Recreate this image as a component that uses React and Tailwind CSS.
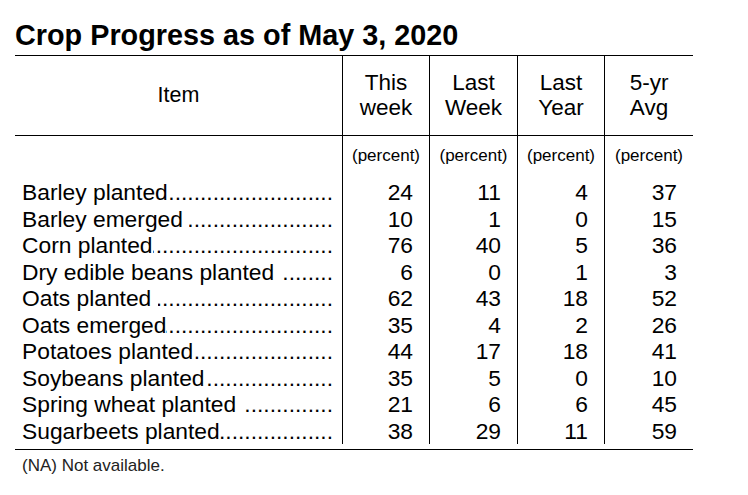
import React from 'react';

const rows = [
  ['Barley planted', '24', '11', '4', '37'],
  ['Barley emerged ', '10', '1', '0', '15'],
  ['Corn planted', '76', '40', '5', '36'],
  ['Dry edible beans planted ', '6', '0', '1', '3'],
  ['Oats planted ', '62', '43', '18', '52'],
  ['Oats emerged', '35', '4', '2', '26'],
  ['Potatoes planted', '44', '17', '18', '41'],
  ['Soybeans planted', '35', '5', '0', '10'],
  ['Spring wheat planted ', '21', '6', '6', '45'],
  ['Sugarbeets planted', '38', '29', '11', '59'],
];

const heads = [
  ['This', 'week'],
  ['Last', 'Week'],
  ['Last', 'Year'],
  ['5-yr', 'Avg'],
];

const cols = 'grid grid-cols-[327px_87px_88px_87px_89px]';
const dots = '.'.repeat(80);

export default function App() {
  return (
    <div
      className="w-[748px] h-[495px] bg-white text-black pl-[15px] pt-[19px]"
      style={{ fontFamily: '"Liberation Sans", Arial, sans-serif' }}
    >
      <h1 className="text-[28.8px] leading-[32px] font-bold mb-[4px]">
        Crop Progress as of May 3, 2020
      </h1>

      <div className="w-[678px] border-t border-b border-black pb-[5px]">
        {/* header */}
        <div className={`${cols} h-[80px] border-b border-black`}>
          <div className="flex items-center justify-center text-[21.5px]">Item</div>
          {heads.map(([a, b]) => (
            <div
              key={a + b}
              className="border-l border-black flex flex-col items-center justify-center text-[22.5px] leading-[24.5px]"
            >
              <span>{a}</span>
              <span>{b}</span>
            </div>
          ))}
        </div>

        {/* units */}
        <div className={`${cols} h-[43px]`}>
          <div />
          {heads.map(([a, b]) => (
            <div
              key={a + b}
              className="border-l border-black text-center text-[17px] leading-[20px] pt-[10px]"
            >
              (percent)
            </div>
          ))}
        </div>

        {rows.map(([label, ...vals]) => (
          <div key={label} className={`${cols} h-[26.5px] text-[22.8px] leading-[26.5px]`}>
            <div className="flex pl-[7px] pr-[9px] whitespace-nowrap">
              <span className="whitespace-pre">{label}</span>
              <span className="flex-1 flex justify-end overflow-hidden">
                <span className="shrink-0">{dots}</span>
              </span>
            </div>
            {vals.map((v, i) => (
              <div key={i} className="border-l border-black text-right pr-4">
                {v}
              </div>
            ))}
          </div>
        ))}
      </div>

      <p className="mt-[6px] pl-[7px] text-[17px] leading-[20px] text-[#222]">
        (NA) Not available.
      </p>
    </div>
  );
}
